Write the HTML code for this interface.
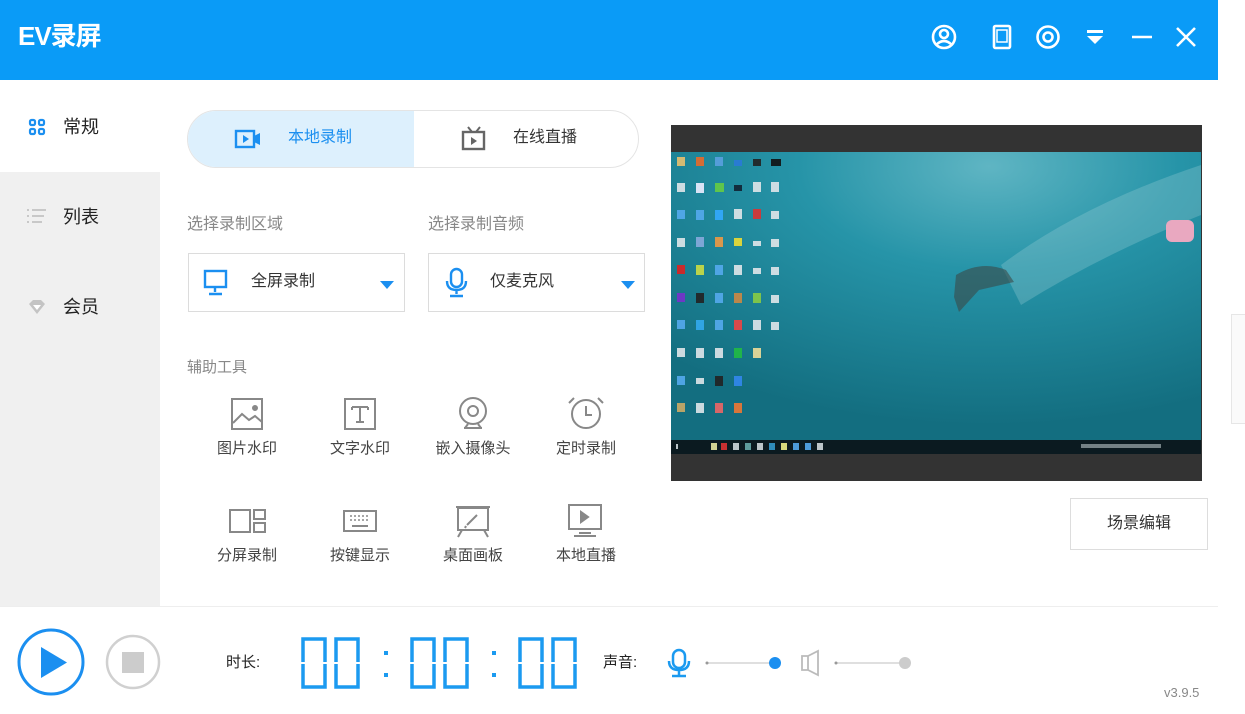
<!DOCTYPE html>
<html><head><meta charset="utf-8"><style>
*{margin:0;padding:0;box-sizing:border-box}
body{width:1245px;height:714px;background:#fff;font-family:"Liberation Sans","Noto Sans CJK SC",sans-serif;position:relative;overflow:hidden;color:#333;line-height:1.15}
.abs{position:absolute}
.hdr{left:0;top:0;width:1218px;height:80px;background:#0a9bf7}
.title{left:18px;top:22px;color:#fff;font-size:26px;font-weight:bold;letter-spacing:-1px}
.side{left:0;top:172px;width:160px;height:435px;background:#f0f0f0}
.nav{font-size:18px;color:#222}
.gray{color:#888;font-size:16px}
.tool{font-size:15px;color:#444;width:90px;text-align:center}
.sel{border:1px solid #dcdcdc;background:#fff;height:59px;width:217px}
</style></head><body>
<div class="abs hdr"></div>
<div class="abs title">EV录屏</div>
<svg class="abs" style="left:925px;top:22px" width="290" height="32" viewBox="0 0 290 32">
<g fill="none" stroke="#fff" stroke-width="2.6">
<circle cx="19" cy="15" r="11"/><circle cx="19" cy="12" r="4"/><path d="M11 23q8-8 16 0"/>
<rect x="69" y="4" width="16" height="22" rx="1.5"/><path d="M72 8h10v12h-10z" stroke-width="1.5"/>
<circle cx="123" cy="15" r="10.5"/><circle cx="123" cy="15" r="4.5"/>
<path d="M207 15h20"/><path d="M252 6l18 18M270 6l-18 18"/>
</g>
<path d="M162 8h16v3h-16z" fill="#fff"/><path d="M162 14h16l-8 8z" fill="#fff"/>
</svg>

<div class="abs side"></div>
<svg class="abs" style="left:28px;top:118px" width="20" height="20"><g fill="none" stroke="#1b8ff0" stroke-width="2.2"><rect x="2" y="2" width="5" height="5" rx="1.5"/><rect x="11" y="2" width="5" height="5" rx="1.5"/><rect x="2" y="11" width="5" height="5" rx="1.5"/><rect x="11" y="11" width="5" height="5" rx="1.5"/></g></svg>
<div class="abs nav" style="left:63px;top:117px">常规</div>
<svg class="abs" style="left:27px;top:208px" width="22" height="20"><g stroke="#bbb" stroke-width="1.4"><path d="M0 2h2M5 2h14M0 8h2M5 8h12M0 14h2M5 14h10"/></g></svg>
<div class="abs nav" style="left:63px;top:207px">列表</div>
<svg class="abs" style="left:27px;top:298px" width="20" height="20"><path d="M2 6l4-4h8l4 4-8 10z" fill="#c4c4c4"/><path d="M6 7h8l-4 5z" fill="#fff"/></svg>
<div class="abs nav" style="left:63px;top:297px">会员</div>

<div class="abs" style="left:187px;top:110px;width:452px;height:58px;border:1px solid #e4e4e4;border-radius:29px;background:#fff;overflow:hidden">
<div style="position:absolute;left:0;top:0;width:226px;height:58px;background:#ddf0fd"></div>
</div>
<svg class="abs" style="left:234px;top:128px" width="30" height="22"><rect x="2" y="3" width="18" height="16" fill="none" stroke="#1b8ff0" stroke-width="2.4"/><path d="M9 7v8l6-4z" fill="#1b8ff0"/><path d="M20 8l6-3v12l-6-3z" fill="#1b8ff0"/></svg>
<div class="abs" style="left:288px;top:129px;font-size:16px;color:#1b8ff0">本地录制</div>
<svg class="abs" style="left:460px;top:125px" width="28" height="28"><path d="M8 2l4 5M20 2l-4 5" stroke="#666" stroke-width="2"/><rect x="3" y="7" width="21" height="17" fill="none" stroke="#666" stroke-width="2.4"/><path d="M11 12v8l6-4z" fill="#666"/></svg>
<div class="abs" style="left:513px;top:129px;font-size:16px;color:#333">在线直播</div>

<div class="abs gray" style="left:187px;top:216px">选择录制区域</div>
<div class="abs gray" style="left:428px;top:216px">选择录制音频</div>
<div class="abs sel" style="left:188px;top:253px"></div>
<div class="abs sel" style="left:428px;top:253px"></div>
<svg class="abs" style="left:203px;top:269px" width="26" height="28"><rect x="2" y="2" width="21" height="16" fill="none" stroke="#1b8ff0" stroke-width="2.4"/><path d="M12 18v5M6 25h13" stroke="#1b8ff0" stroke-width="2.4"/></svg>
<div class="abs" style="left:251px;top:273px;font-size:16px;color:#333">全屏录制</div>
<svg class="abs" style="left:379px;top:280px" width="16" height="10"><path d="M1 1h14l-7 8z" fill="#1b8ff0"/></svg>
<svg class="abs" style="left:444px;top:267px" width="26" height="32"><rect x="7" y="2" width="11" height="18" rx="5.5" fill="none" stroke="#1b8ff0" stroke-width="2.4"/><path d="M3 14q0 9 9.5 9q9.5 0 9.5-9M12.5 23v4M6 29h13" fill="none" stroke="#1b8ff0" stroke-width="2.4"/></svg>
<div class="abs" style="left:490px;top:273px;font-size:16px;color:#333">仅麦克风</div>
<svg class="abs" style="left:620px;top:280px" width="16" height="10"><path d="M1 1h14l-7 8z" fill="#1b8ff0"/></svg>

<div class="abs gray" style="left:187px;top:359px;font-size:15px">辅助工具</div>
<svg class="abs" style="left:200px;top:390px" width="420" height="150"><g fill="none" stroke="#888" stroke-width="2">
<rect x="32" y="9" width="30" height="30"/><path d="M33 33l9-9 7 6 6-4 7 6"/><circle cx="55" cy="18" r="2" fill="#888"/>
<rect x="145" y="9" width="30" height="30"/><path d="M152 17h16M160 17v15M156 32h8"/><path d="M152 17v3M168 17v3"/>
<circle cx="273" cy="21" r="13"/><circle cx="273" cy="21" r="5"/><path d="M264 38h18M268 34l-3 4M278 34l3 4"/>
<circle cx="386" cy="24" r="14"/><path d="M386 16v9h6M374 8l-5 5M398 8l5 5"/>
<rect x="30" y="120" width="20" height="22"/><rect x="54" y="120" width="11" height="9"/><rect x="54" y="133" width="11" height="9"/>
<rect x="144" y="121" width="32" height="20"/><path d="M150 126h20M150 130h20" stroke-dasharray="2 2" stroke-width="1.5"/><path d="M152 136h16"/>
<rect x="258" y="118" width="30" height="22"/><path d="M256 117h34M262 140l-4 7M284 140l4 7M267 135l10-10" /><path d="M266 136l-1 2" />
<rect x="369" y="115" width="32" height="24"/><path d="M381 122v10l7-5z" fill="#888"/><path d="M379 143h12M374 146h22"/>
</g></svg>
<div class="abs tool" style="left:202px;top:440px">图片水印</div>
<div class="abs tool" style="left:315px;top:440px">文字水印</div>
<div class="abs tool" style="left:428px;top:440px">嵌入摄像头</div>
<div class="abs tool" style="left:541px;top:440px">定时录制</div>
<div class="abs tool" style="left:202px;top:547px">分屏录制</div>
<div class="abs tool" style="left:315px;top:547px">按键显示</div>
<div class="abs tool" style="left:428px;top:547px">桌面画板</div>
<div class="abs tool" style="left:541px;top:547px">本地直播</div>

<svg class="abs" style="left:671px;top:125px" width="531" height="356" viewBox="0 0 531 356">
<defs>
<radialGradient id="g" cx="0.6" cy="0.05" r="0.9"><stop offset="0" stop-color="#5fb5c3"/><stop offset="0.4" stop-color="#2694a8"/><stop offset="1" stop-color="#136e80"/></radialGradient>
</defs>
<rect width="531" height="356" fill="#333"/>
<rect x="0" y="27" width="530" height="288" fill="url(#g)"/>
<path d="M330 140q80-60 200-100v50q-100 40-180 90z" fill="#9fd0d8" opacity="0.3"/>
<path d="M285 150q25-15 50-5l8 12-35 8-20 22-5-15z" fill="#3a4a48" opacity="0.6"/>
<rect x="495" y="95" width="28" height="22" fill="#e9a8c0" rx="6"/>
<rect x="0" y="315" width="530" height="14" fill="#0b1a20"/>
<g fill="#cfd8dc" opacity="0.9">
<rect x="5" y="319" width="2" height="5"/><rect x="40" y="318" width="6" height="7" fill="#e6e6a0"/><rect x="50" y="318" width="6" height="7" fill="#d33"/><rect x="62" y="318" width="6" height="7"/><rect x="74" y="318" width="6" height="7" fill="#6aa"/><rect x="86" y="318" width="6" height="7"/><rect x="98" y="318" width="6" height="7" fill="#39c"/><rect x="110" y="318" width="6" height="7" fill="#ee8"/><rect x="122" y="318" width="6" height="7" fill="#5ae"/><rect x="134" y="318" width="6" height="7" fill="#5ae"/><rect x="146" y="318" width="6" height="7"/>
<rect x="410" y="319" width="80" height="4" opacity="0.6"/>
</g>
<g opacity="0.9">
<g fill="#e0e6ea"><rect x="6" y="32" width="8" height="9" fill="#e8c070"/><rect x="25" y="32" width="8" height="9" fill="#e86a2a"/><rect x="44" y="32" width="8" height="9" fill="#5aa0e0"/><rect x="63" y="35" width="8" height="6" fill="#2a7ad8"/><rect x="82" y="34" width="8" height="7" fill="#222"/><rect x="100" y="34" width="10" height="7" fill="#111"/></g>
<g fill="#e0e6ea"><rect x="6" y="58" width="8" height="9"/><rect x="25" y="58" width="8" height="10" fill="#eef"/><rect x="44" y="58" width="9" height="9" fill="#6c4"/><rect x="63" y="60" width="8" height="6" fill="#123"/><rect x="82" y="57" width="8" height="10"/><rect x="100" y="57" width="8" height="10"/></g>
<g fill="#e0e6ea"><rect x="6" y="85" width="8" height="9" fill="#5ae"/><rect x="25" y="85" width="8" height="10" fill="#5ae"/><rect x="44" y="85" width="8" height="10" fill="#3af"/><rect x="63" y="84" width="8" height="10"/><rect x="82" y="84" width="8" height="10" fill="#d33"/><rect x="100" y="86" width="8" height="8"/></g>
<g fill="#e0e6ea"><rect x="6" y="113" width="8" height="9"/><rect x="25" y="112" width="8" height="10" fill="#8ad"/><rect x="44" y="112" width="8" height="10" fill="#e94"/><rect x="63" y="113" width="8" height="8" fill="#ed3"/><rect x="82" y="116" width="8" height="5"/><rect x="100" y="114" width="8" height="8"/></g>
<g fill="#e0e6ea"><rect x="6" y="140" width="8" height="9" fill="#d22"/><rect x="25" y="140" width="8" height="10" fill="#cd4"/><rect x="44" y="140" width="8" height="10" fill="#5ae"/><rect x="63" y="140" width="8" height="10"/><rect x="82" y="143" width="8" height="6"/><rect x="100" y="142" width="8" height="8"/></g>
<g fill="#e0e6ea"><rect x="6" y="168" width="8" height="9" fill="#73c"/><rect x="25" y="168" width="8" height="10" fill="#222"/><rect x="44" y="168" width="8" height="10" fill="#5ae"/><rect x="63" y="168" width="8" height="10" fill="#c84"/><rect x="82" y="168" width="8" height="10" fill="#8c4"/><rect x="100" y="170" width="8" height="8"/></g>
<g fill="#e0e6ea"><rect x="6" y="195" width="8" height="9" fill="#5ae"/><rect x="25" y="195" width="8" height="10" fill="#3ae"/><rect x="44" y="195" width="8" height="10" fill="#5ae"/><rect x="63" y="195" width="8" height="10" fill="#e44"/><rect x="82" y="195" width="8" height="10"/><rect x="100" y="197" width="8" height="8"/></g>
<g fill="#e0e6ea"><rect x="6" y="223" width="8" height="9"/><rect x="25" y="223" width="8" height="10"/><rect x="44" y="223" width="8" height="10"/><rect x="63" y="223" width="8" height="10" fill="#2b4"/><rect x="82" y="223" width="8" height="10" fill="#ed9"/></g>
<g fill="#e0e6ea"><rect x="6" y="251" width="8" height="9" fill="#5ae"/><rect x="25" y="253" width="8" height="6"/><rect x="44" y="251" width="8" height="10" fill="#222"/><rect x="63" y="251" width="8" height="10" fill="#38e"/></g>
<g fill="#e0e6ea"><rect x="6" y="278" width="8" height="9" fill="#ca6"/><rect x="25" y="278" width="8" height="10"/><rect x="44" y="278" width="8" height="10" fill="#e66"/><rect x="63" y="278" width="8" height="10" fill="#e73"/></g>
</g>
</svg>
<div class="abs" style="left:1070px;top:498px;width:138px;height:52px;border:1px solid #ddd;text-align:center;line-height:50px;font-size:16px;color:#333">场景编辑</div>
<div class="abs" style="left:1231px;top:314px;width:14px;height:110px;border:1px solid #e6e6e6;border-right:none;background:#fafafa"></div>

<div class="abs" style="left:0;top:606px;width:1218px;height:1px;background:#eee"></div>
<svg class="abs" style="left:0;top:620px" width="920" height="90">
<circle cx="51" cy="42" r="32" fill="none" stroke="#1b8ff0" stroke-width="3"/><path d="M41 27v31l26-15.5z" fill="#1b8ff0"/>
<circle cx="133" cy="42" r="26" fill="none" stroke="#d0d0d0" stroke-width="2.5"/><rect x="122" y="32" width="22" height="21" fill="#ccc"/>
<g fill="none" stroke="#1b9af0" stroke-width="3.5">
<rect x="303" y="19" width="22" height="48"/><rect x="336" y="19" width="22" height="48"/>
<rect x="412" y="19" width="22" height="48"/><rect x="445" y="19" width="22" height="48"/>
<rect x="520" y="19" width="22" height="48"/><rect x="553" y="19" width="22" height="48"/>
</g>
<g stroke="#fff" stroke-width="2"><path d="M300 43h30M333 43h30M409 43h30M442 43h30M517 43h30M550 43h30"/></g>
<g fill="#1b9af0"><rect x="384" y="31" width="4" height="4"/><rect x="384" y="53" width="4" height="4"/><rect x="492" y="31" width="4" height="4"/><rect x="492" y="53" width="4" height="4"/></g>
<rect x="673" y="30" width="12" height="18" rx="6" fill="none" stroke="#1b9af0" stroke-width="2.5"/><path d="M669 41q0 9 10 9q10 0 10-9M679 50v5M672 56h14" fill="none" stroke="#1b9af0" stroke-width="2.5"/>
<path d="M707 43h68" stroke="#ccc" stroke-width="1.2"/><circle cx="707" cy="43" r="1.5" fill="#999"/><circle cx="775" cy="43" r="6" fill="#1b8ff0"/>
<path d="M802 36h6l10-5v24l-10-5h-6z M808 36v14" fill="none" stroke="#bbb" stroke-width="1.8"/>
<path d="M836 43h68" stroke="#ccc" stroke-width="1.2"/><circle cx="836" cy="43" r="1.5" fill="#999"/><circle cx="905" cy="43" r="6" fill="#ccc"/>
</svg>
<div class="abs" style="left:226px;top:654px;font-size:15px;color:#222">时长:</div>
<div class="abs" style="left:603px;top:654px;font-size:15px;color:#222">声音:</div>
<div class="abs" style="left:1164px;top:686px;font-size:13px;color:#888">v3.9.5</div>
</body></html>
